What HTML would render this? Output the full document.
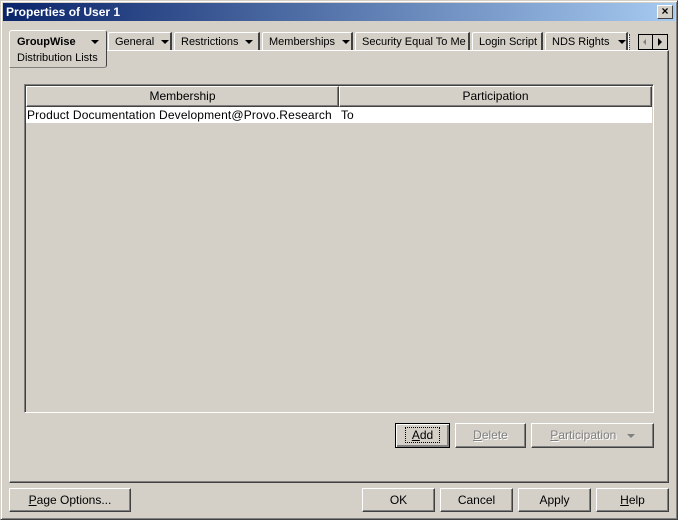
<!DOCTYPE html>
<html><head><style>
*{box-sizing:border-box;margin:0;padding:0}
body{width:678px;height:520px;background:#d4d0c8;font:12px "Liberation Sans",Arial,sans-serif;color:#000;position:relative;overflow:hidden}
.a{position:absolute}
.win{left:0;top:0;width:678px;height:520px;border:1px solid;border-color:#d4d0c8 #404040 #404040 #d4d0c8;box-shadow:inset 1px 1px #fff,inset -1px -1px #808080}
.title{left:3px;top:3px;width:672px;height:18px;background:linear-gradient(90deg,#0a246a,#a6caf0);color:#fff;font-weight:bold;font-size:12px;line-height:18px;padding-left:3px}
.close{right:5px;top:5px;width:16px;height:14px;background:#d4d0c8;border:1px solid;border-color:#fff #404040 #404040 #fff;color:#000;font-size:12px;line-height:11px;text-align:center;font-weight:bold}
.tab{top:32px;height:18px;border-left:1px solid #fff;border-top:1px solid #fff;border-right:2px solid #404040;line-height:19px;padding-left:6px;white-space:nowrap;border-top-left-radius:2px;font-size:11px;overflow:hidden}
.arr{display:inline-block;width:0;height:0;border-left:4px solid transparent;border-right:4px solid transparent;border-top:4px solid #000;vertical-align:middle;margin-left:7px}
.btn{height:25px;border:1px solid;border-color:#fff #404040 #404040 #fff;box-shadow:inset -1px -1px #808080;text-align:center;line-height:22px}
.dis{color:#808080;text-shadow:1px 1px #fff}
</style></head><body>
<div class="a win"></div>
<div class="a title">Properties of User 1</div>
<div class="a close">×</div>
<div class="a" style="left:9px;top:50px;width:660px;height:433px;border:1px solid;border-color:#fff #404040 #404040 #fff;box-shadow:inset -1px -1px #808080"></div>
<div class="a tab" style="left:108px;width:64px">General<span class="arr"></span></div>
<div class="a tab" style="left:174px;width:86px">Restrictions<span class="arr"></span></div>
<div class="a tab" style="left:262px;width:91px">Memberships<span class="arr"></span></div>
<div class="a tab" style="left:355px;width:115px">Security Equal To Me</div>
<div class="a tab" style="left:472px;width:71px">Login Script</div>
<div class="a tab" style="left:545px;width:83px">NDS Rights<span class="arr" style="margin-left:9px"></span></div>
<div class="a" style="left:9px;top:30px;width:98px;height:38px;background:#d4d0c8;border:1px solid;border-color:#fff #404040 #808080 #fff;border-radius:3px 3px 3px 0"></div>
<div class="a" style="left:17px;top:36px;font-weight:bold;font-size:11px">GroupWise<span class="arr" style="margin-left:15px"></span></div>
<div class="a" style="left:17px;top:52px;font-size:11px">Distribution Lists</div>
<div class="a" style="left:628px;top:34px;width:2px;height:16px;border-left:1px solid #fff;border-right:1px dotted #404040"></div>
<div class="a" style="left:638px;top:34px;width:30px;height:16px;border:1px solid #000;background:#d4d0c8"></div>
<div class="a" style="left:652px;top:35px;width:1px;height:14px;background:#000"></div>
<div class="a" style="left:643px;top:39px;width:0;height:0;border-top:3px solid transparent;border-bottom:3px solid transparent;border-right:3px solid #808080"></div>
<div class="a" style="left:658px;top:38px;width:0;height:0;border-top:4px solid transparent;border-bottom:4px solid transparent;border-left:4px solid #000"></div>
<div class="a" style="left:24px;top:84px;width:630px;height:329px;border:1px solid;border-color:#808080 #fff #fff #808080;box-shadow:inset 1px 1px #404040"></div>
<div class="a btn" style="left:26px;top:86px;width:313px;height:21px;line-height:19px">Membership</div>
<div class="a btn" style="left:339px;top:86px;width:313px;height:21px;line-height:19px">Participation</div>
<div class="a" style="left:26px;top:107px;width:626px;height:16px;background:#fff"></div>
<div class="a" style="left:27px;top:108px;letter-spacing:0.15px">Product Documentation Development@Provo.Research</div>
<div class="a" style="left:341px;top:108px">To</div>
<div class="a btn" style="left:395px;top:423px;width:55px;border-color:#000;box-shadow:inset 1px 1px #fff,inset -2px -2px #808080"><span style="border:1px dotted #000;padding:0 6px"><u>A</u>dd</span></div>
<div class="a btn dis" style="left:455px;top:423px;width:71px"><u>D</u>elete</div>
<div class="a btn dis" style="left:531px;top:423px;width:123px"><u>P</u>articipation <span class="arr" style="border-top-color:#808080"></span></div>
<div class="a btn" style="left:9px;top:488px;width:122px;height:24px"><u>P</u>age Options...</div>
<div class="a btn" style="left:362px;top:488px;width:73px;height:24px">OK</div>
<div class="a btn" style="left:440px;top:488px;width:73px;height:24px">Cancel</div>
<div class="a btn" style="left:518px;top:488px;width:73px;height:24px">Apply</div>
<div class="a btn" style="left:596px;top:488px;width:73px;height:24px"><u>H</u>elp</div>
</body></html>
